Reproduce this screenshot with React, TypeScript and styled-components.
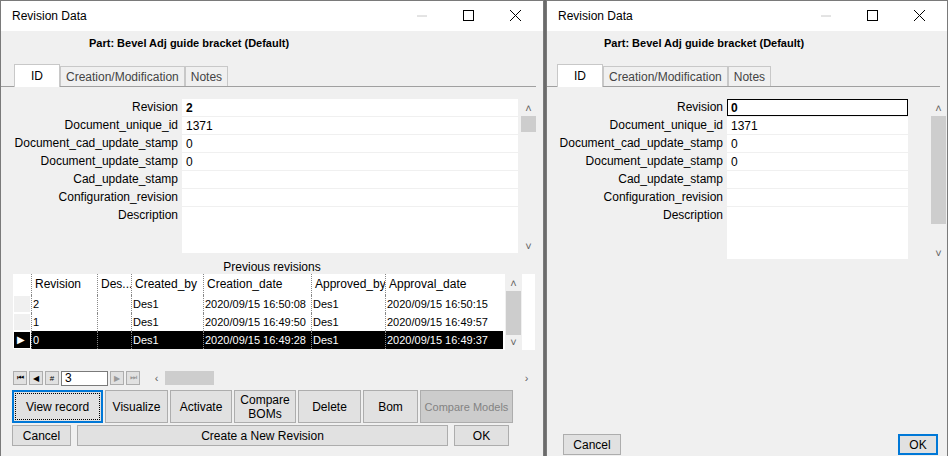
import * as React from "react";
import styled, { createGlobalStyle } from "styled-components";

const GlobalStyle = createGlobalStyle`
  html, body { margin: 0; padding: 0; background: #6b6b6b; }
  body { font-family: "Liberation Sans", Arial, sans-serif; font-size: 12px; color: #000; }
`;

const fields = [
  "Revision",
  "Document_unique_id",
  "Document_cad_update_stamp",
  "Document_update_stamp",
  "Cad_update_stamp",
  "Configuration_revision",
];

const rows = [
  { rev: "2", created: "2020/09/15 16:50:08", approved: "2020/09/15 16:50:15" },
  { rev: "1", created: "2020/09/15 16:49:50", approved: "2020/09/15 16:49:57" },
  { rev: "0", created: "2020/09/15 16:49:28", approved: "2020/09/15 16:49:37" },
];

const cols = [
  { name: "Revision", w: 66 },
  { name: "Des...", w: 34 },
  { name: "Created_by", w: 72 },
  { name: "Creation_date", w: 108 },
  { name: "Approved_by", w: 74 },
  { name: "Approval_date", w: 118 },
];

function WindowFrame(props: { width: number; children: React.ReactNode }) {
  return (
    <Win style={{ width: props.width }}>
      <TitleBar>
        <Title>Revision Data</Title>
        <Controls>
          <svg width="140" height="14" viewBox="0 0 140 14">
            <line x1="20" y1="7" x2="30" y2="7" stroke="#c8c8c8" />
            <rect x="66.5" y="1.5" width="10" height="10" fill="none" stroke="#000" />
            <path d="M113 1 L124 12 M124 1 L113 12" stroke="#000" />
          </svg>
        </Controls>
      </TitleBar>
      <Body>{props.children}</Body>
    </Win>
  );
}

function Tabs(props: { indent: number }) {
  return (
    <TabStrip style={{ paddingLeft: props.indent }}>
      <Tab $active>ID</Tab>
      <Tab>Creation/Modification</Tab>
      <Tab>Notes</Tab>
    </TabStrip>
  );
}

function ScrollV(props: { height: number; thumbTop: number; thumbH: number }) {
  return (
    <VScroll style={{ height: props.height }}>
      <Arrow>˄</Arrow>
      <Track>
        <Thumb style={{ top: props.thumbTop, height: props.thumbH }} />
      </Track>
      <Arrow>˅</Arrow>
    </VScroll>
  );
}

function FieldList(props: { labelW: number; inputW: number; first: string; bordered?: boolean; descH: number }) {
  const values = [props.first, "1371", "0", "0", "", ""];
  return (
    <FieldCol>
      {fields.map((f, i) => (
        <FieldRow key={f}>
          <Label style={{ width: props.labelW }}>{f}</Label>
          <Input style={{ width: props.inputW }} $bold={i === 0} $outlined={i === 0 && props.bordered}>
            {values[i]}
          </Input>
        </FieldRow>
      ))}
      <FieldRow>
        <Label style={{ width: props.labelW }}>Description</Label>
        <Input style={{ width: props.inputW, height: props.descH }} />
      </FieldRow>
    </FieldCol>
  );
}

export default function App() {
  return (
    <>
      <GlobalStyle />
      <Desk>
        <WindowFrame width={544}>
          <PartLabel style={{ paddingLeft: 88 }}>Part: Bevel Adj guide bracket (Default)</PartLabel>
          <Tabs indent={13} />
          <FieldsArea style={{ paddingLeft: 10, paddingTop: 12 }}>
            <FieldList labelW={167} inputW={336} first="2" descH={46} />
            <ScrollV height={155} thumbTop={0} thumbH={16} />
          </FieldsArea>
          <GridCaption>Previous revisions</GridCaption>
          <Grid>
            <GridTable>
              <HeadRow>
                <RowHead $header />
                {cols.map((c) => (
                  <HeadCell key={c.name} style={{ width: c.w }}>{c.name}</HeadCell>
                ))}
              </HeadRow>
              {rows.map((r, i) => {
                const sel = i === 2;
                const vals = [r.rev, "", "Des1", r.created, "Des1", r.approved];
                return (
                  <DataRow key={r.rev} $selected={sel}>
                    <RowHead $selected={sel}>{sel ? "▶" : ""}</RowHead>
                    {cols.map((c, j) => (
                      <Cell key={c.name} style={{ width: c.w }}>{vals[j]}</Cell>
                    ))}
                  </DataRow>
                );
              })}
            </GridTable>
            <ScrollV height={76} thumbTop={0} thumbH={44} />
          </Grid>
          <NavBar>
            <NavBtn>⏮</NavBtn>
            <NavBtn>◀</NavBtn>
            <NavBtn>#</NavBtn>
            <NavInput>3</NavInput>
            <NavBtn $dim>▶</NavBtn>
            <NavBtn $dim>⏭</NavBtn>
            <HScroll>
              <Arrow>‹</Arrow>
              <HThumb />
              <HSpacer />
              <Arrow>›</Arrow>
            </HScroll>
          </NavBar>
          <ButtonRow>
            <Btn $w={91} $focus>View record</Btn>
            <Btn $w={63}>Visualize</Btn>
            <Btn $w={62}>Activate</Btn>
            <Btn $w={62}>Compare<br />BOMs</Btn>
            <Btn $w={63}>Delete</Btn>
            <Btn $w={55}>Bom</Btn>
            <Btn $w={93} $disabled>Compare Models</Btn>
          </ButtonRow>
          <BottomRow>
            <SmallBtn $w={59}>Cancel</SmallBtn>
            <SmallBtn $w={371}>Create a New Revision</SmallBtn>
            <SmallBtn $w={55}>OK</SmallBtn>
          </BottomRow>
        </WindowFrame>
        <WindowFrame width={402}>
          <PartLabel style={{ paddingLeft: 57 }}>Part: Bevel Adj guide bracket (Default)</PartLabel>
          <Tabs indent={10} />
          <FieldsArea style={{ paddingLeft: 10, paddingTop: 12 }}>
            <FieldList labelW={166} inputW={181} first="0" bordered descH={52} />
            <Gap />
            <ScrollV height={162} thumbTop={0} thumbH={108} />
          </FieldsArea>
          <Filler />
          <BottomRow style={{ justifyContent: "space-between", padding: "0 9px 0 5px" }}>
            <SmallBtn $w={58}>Cancel</SmallBtn>
            <SmallBtn $w={40} $focus>OK</SmallBtn>
          </BottomRow>
        </WindowFrame>
      </Desk>
    </>
  );
}

const Desk = styled.div`
  display: flex;
  gap: 2px;
  width: 948px;
  height: 456px;
  overflow: hidden;
`;

const Win = styled.div`
  display: flex;
  flex-direction: column;
  height: 456px;
  background: #f0f0f0;
  border: 1px solid #7a7a7a;
  border-bottom: none;
  box-sizing: border-box;
`;

const TitleBar = styled.div`
  display: flex;
  align-items: center;
  justify-content: space-between;
  height: 30px;
  background: #fff;
  padding-left: 11px;
`;

const Title = styled.span`
  font-size: 12px;
`;

const Controls = styled.div`
  display: flex;
  padding-right: 6px;
`;

const Body = styled.div`
  display: flex;
  flex-direction: column;
  flex: 1;
`;

const PartLabel = styled.div`
  font-weight: bold;
  font-size: 11px;
  height: 14px;
  margin-top: 6px;
`;

const TabStrip = styled.div`
  display: flex;
  align-items: flex-end;
  height: 23px;
  margin-top: 12px;
  margin-right: 7px;
  border-bottom: 1px solid #a0a0a0;
`;

const Tab = styled.div<{ $active?: boolean }>`
  height: ${(p) => (p.$active ? "23px" : "20px")};
  padding: 0 ${(p) => (p.$active ? "16px" : "5px")};
  display: flex;
  align-items: center;
  background: ${(p) => (p.$active ? "#fff" : "#f0f0f0")};
  color: ${(p) => (p.$active ? "#000" : "#444")};
  border: 1px solid #c8c8c8;
  border-bottom: none;
  margin-bottom: ${(p) => (p.$active ? "-1px" : "0")};
  box-sizing: border-box;
`;

const FieldsArea = styled.div`
  display: flex;
  align-items: flex-start;
`;

const FieldCol = styled.div`
  display: flex;
  flex-direction: column;
  gap: 1px;
`;

const FieldRow = styled.div`
  display: flex;
  align-items: flex-start;
  gap: 4px;
`;

const Label = styled.div`
  text-align: right;
  height: 17px;
  line-height: 17px;
  white-space: nowrap;
`;

const Input = styled.div<{ $bold?: boolean; $outlined?: boolean }>`
  height: 17px;
  line-height: 17px;
  background: #fff;
  padding-left: 3px;
  box-sizing: border-box;
  font-weight: ${(p) => (p.$bold ? "bold" : "normal")};
  border: 1px solid ${(p) => (p.$outlined ? "#000" : "#fff")};
`;

const Gap = styled.div`
  width: 20px;
`;

const VScroll = styled.div`
  display: flex;
  flex-direction: column;
  width: 17px;
  margin-left: 2px;
  background: #f0f0f0;
`;

const Arrow = styled.div`
  height: 17px;
  width: 17px;
  display: flex;
  align-items: center;
  justify-content: center;
  color: #606060;
  font-size: 11px;
`;

const Track = styled.div`
  flex: 1;
  position: relative;
`;

const Thumb = styled.div`
  position: absolute;
  left: 1px;
  right: 1px;
  background: #cdcdcd;
`;

const GridCaption = styled.div`
  text-align: center;
  margin-top: 6px;
  height: 14px;
  line-height: 14px;
`;

const Grid = styled.div`
  display: flex;
  margin: 0 8px 0 12px;
  background: #fff;
  height: 76px;
  font-size: 11px;
`;

const GridTable = styled.div`
  display: flex;
  flex-direction: column;
  width: 490px;
  background: #f0f0f0;
`;

const HeadRow = styled.div`
  display: flex;
  height: 21px;
  align-items: center;
  background: #fff;
  font-size: 12px;
`;

const HeadCell = styled.div`
  height: 21px;
  line-height: 21px;
  padding-left: 3px;
  box-sizing: border-box;
  border-left: 1px dotted #888;
  white-space: nowrap;
  overflow: hidden;
`;

const DataRow = styled.div<{ $selected?: boolean }>`
  display: flex;
  height: 18px;
  background: ${(p) => (p.$selected ? "#000" : "#fff")};
  color: ${(p) => (p.$selected ? "#fff" : "#000")};
`;

const RowHead = styled.div<{ $selected?: boolean; $header?: boolean }>`
  width: 18px;
  height: ${(p) => (p.$header ? "21px" : "18px")};
  box-sizing: border-box;
  background: ${(p) => (p.$selected ? "#000" : p.$header ? "#fff" : "#f0f0f0")};
  border: ${(p) => (p.$header ? "none" : "1px solid #fff")};
  color: #fff;
  font-size: 10px;
  line-height: 16px;
  padding-left: 3px;
`;

const Cell = styled.div`
  height: 18px;
  line-height: 18px;
  padding-left: 1px;
  box-sizing: border-box;
  border-left: 1px dotted #888;
  white-space: nowrap;
  overflow: hidden;
`;

const NavBar = styled.div`
  display: flex;
  align-items: center;
  gap: 2px;
  margin: 20px 8px 0 12px;
  height: 16px;
`;

const NavBtn = styled.div<{ $dim?: boolean }>`
  width: 14px;
  height: 14px;
  border: 1px solid #adadad;
  background: #e1e1e1;
  font-size: 8px;
  color: ${(p) => (p.$dim ? "#999" : "#000")};
  display: flex;
  align-items: center;
  justify-content: center;
  box-sizing: border-box;
`;

const NavInput = styled.div`
  width: 47px;
  height: 15px;
  background: #fff;
  border: 1px solid #7a7a7a;
  padding-left: 3px;
  line-height: 13px;
  box-sizing: border-box;
`;

const HScroll = styled.div`
  display: flex;
  align-items: center;
  flex: 1;
  margin-left: 6px;
`;

const HThumb = styled.div`
  width: 49px;
  height: 14px;
  background: #cdcdcd;
`;

const HSpacer = styled.div`
  flex: 1;
`;

const ButtonRow = styled.div`
  display: flex;
  gap: 2px;
  margin: 4px 0 0 11px;
`;

const Btn = styled.div<{ $w: number; $focus?: boolean; $disabled?: boolean }>`
  width: ${(p) => p.$w}px;
  height: 33px;
  box-sizing: border-box;
  display: flex;
  align-items: center;
  justify-content: center;
  text-align: center;
  white-space: nowrap;
  font-size: ${(p) => (p.$disabled ? "11px" : "12px")};
  line-height: 14px;
  background: ${(p) => (p.$disabled ? "#cccccc" : "#e1e1e1")};
  color: ${(p) => (p.$disabled ? "#838383" : "#000")};
  border: ${(p) => (p.$focus ? "2px solid #0078d7" : "1px solid #adadad")};
  outline: ${(p) => (p.$focus ? "1px dotted #000" : "none")};
  outline-offset: -4px;
`;

const BottomRow = styled.div`
  display: flex;
  gap: 6px;
  margin: 2px 0 0 11px;
  height: 22px;
`;

const SmallBtn = styled.div<{ $w: number; $focus?: boolean }>`
  width: ${(p) => p.$w}px;
  height: 21px;
  box-sizing: border-box;
  display: flex;
  align-items: center;
  justify-content: center;
  background: #e1e1e1;
  border: ${(p) => (p.$focus ? "2px solid #0078d7" : "1px solid #adadad")};
`;

const Filler = styled.div`
  flex: 1;
`;
